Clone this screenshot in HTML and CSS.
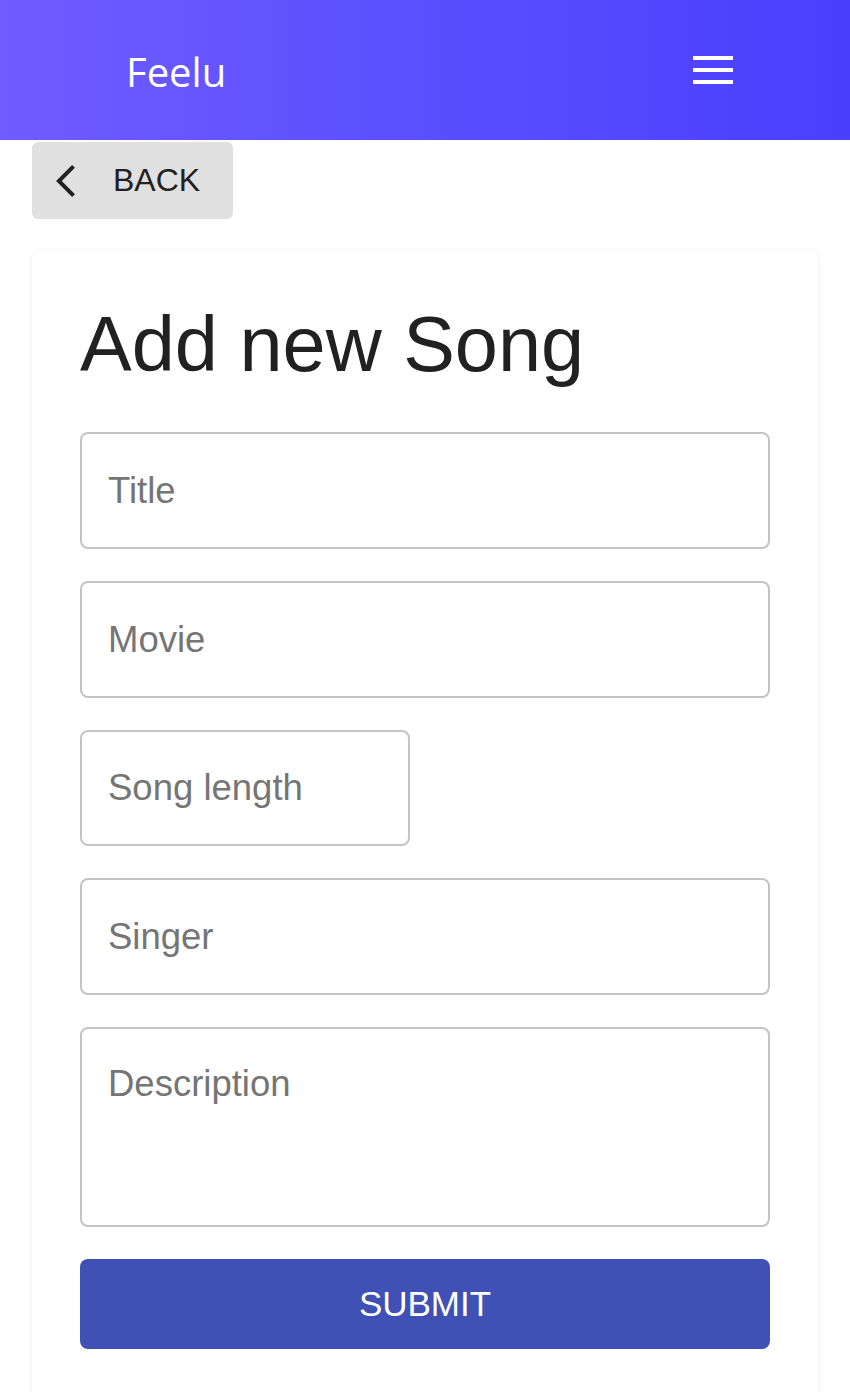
FILE: index.html
```html
<!DOCTYPE html>
<html lang="en">
<head>
<meta charset="utf-8">
<title>Feelu - Add new Song</title>
<link rel="stylesheet" href="styles.css">
</head>
<body>
<header class="appbar">
  <div class="brand">Feelu</div>
  <button class="menu" aria-label="menu">
    <span class="bar"></span><span class="bar"></span><span class="bar"></span>
  </button>
</header>
<main class="page">
  <button class="back">
    <svg class="back-icon" viewBox="0 0 11.67 19.8" aria-hidden="true"><path d="M11.67 1.77 9.9 0 0 9.9 9.9 19.8 11.67 18.03 3.54 9.9z" fill="#212121"/></svg>
    <span>BACK</span>
  </button>
  <section class="card">
    <h1 class="title">Add new Song</h1>
    <form class="form">
      <input class="field" type="text" placeholder="Title">
      <input class="field" type="text" placeholder="Movie">
      <input class="field field-short" type="text" placeholder="Song length">
      <input class="field" type="text" placeholder="Singer">
      <textarea class="field field-area" placeholder="Description"></textarea>
      <button class="submit" type="button">SUBMIT</button>
    </form>
  </section>
</main>
</body>
</html>
```
FILE: styles.css
```css
* { box-sizing: border-box; }
html, body { margin: 0; padding: 0; }
body {
  font-family: "Liberation Sans", Arial, sans-serif;
  background: #fff;
  color: #212121;
  width: 850px;
  overflow: hidden;
}
.appbar {
  height: 140px;
  display: flex;
  align-items: center;
  justify-content: space-between;
  padding: 0 117px 0 126px;
  background: linear-gradient(90deg, #6f5cff 0%, #5a4ffe 50%, #4a3ffc 100%);
}
.brand {
  font-family: "Open Sans", "Noto Sans", sans-serif;
  font-size: 40px;
  color: #fff;
  line-height: 1;
  padding-top: 4px;
}
.menu {
  background: none;
  border: 0;
  padding: 0;
  width: 40px;
  display: flex;
  flex-direction: column;
  gap: 8px;
  margin-top: 0;
}
.bar {
  display: block;
  width: 40px;
  height: 4px;
  background: #fff;
}
.page {
  padding: 2px 32px 0 32px;
}
.back {
  display: flex;
  align-items: center;
  gap: 38px;
  height: 77px;
  padding: 0 33px 0 24px;
  border: 0;
  border-radius: 6px;
  background: #e0e0e0;
  font-family: "Liberation Sans", Arial, sans-serif;
  font-size: 32px;
  color: #212121;
}
.back-icon {
  width: 19px;
  height: 32px;
  display: block;
}
.card {
  margin-top: 31px;
  background: #fff;
  border-radius: 8px;
  box-shadow: 0 1px 4px rgba(0,0,0,0.09), 0 0 1px rgba(0,0,0,0.05);
  padding: 48px 48px 48px 48px;
  min-height: 1200px;
}
.title {
  margin: 0 0 41px 0;
  font-weight: 400;
  font-size: 77.5px;
  line-height: 1.2;
  color: #212121;
}
.form {
  display: flex;
  flex-direction: column;
  align-items: flex-start;
  gap: 32px;
}
.field {
  display: block;
  width: 690px;
  height: 117px;
  border: 2px solid #c4c4c4;
  border-radius: 8px;
  padding: 0 26px;
  font-family: "Liberation Sans", Arial, sans-serif;
  font-size: 36.5px;
  color: #212121;
  background: #fff;
  outline: none;
}
.field::placeholder { color: #757575; opacity: 1; }
.field-short { width: 330px; height: 116px; }
.field-area {
  height: 200px;
  padding-top: 33px;
  line-height: 43px;
  resize: none;
}
.submit {
  width: 690px;
  height: 90px;
  border: 0;
  border-radius: 8px;
  background: #3f51b5;
  color: #fff;
  font-family: "Liberation Sans", Arial, sans-serif;
  font-size: 35px;
}
```
